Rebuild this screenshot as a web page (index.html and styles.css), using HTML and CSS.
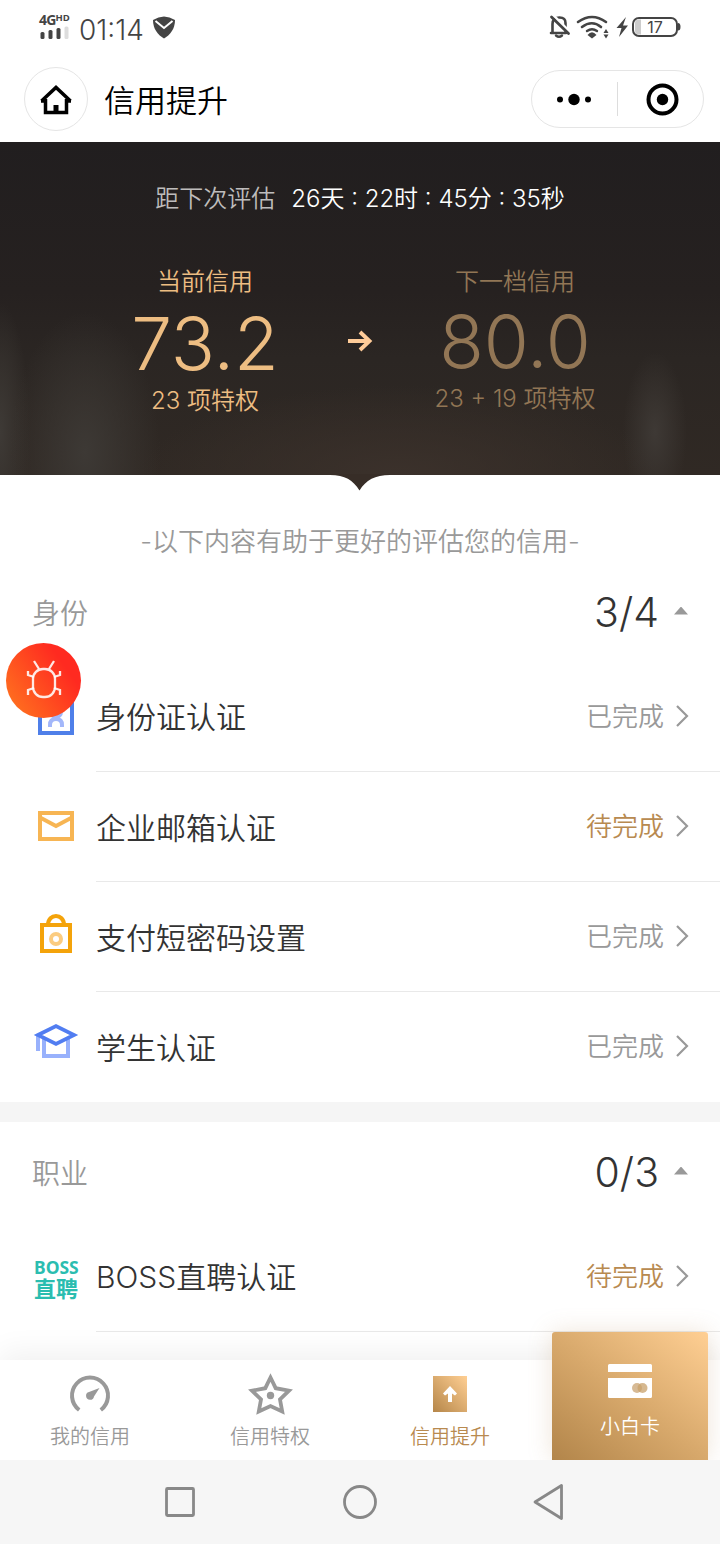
FILE: index.html
```html
<!DOCTYPE html>
<html lang="zh-CN">
<head>
<meta charset="utf-8">
<title>信用提升</title>
<link rel="stylesheet" href="styles.css">
</head>
<body>
<div class="phone">
  <header class="status">
    <div class="signal">
      <div class="net"><span>4G</span><small>HD</small></div>
      <svg width="30" height="13" viewBox="0 0 30 13"><g fill="#444"><rect x="1.500" y="5" width="4" height="7" rx="1.500"/><rect x="9.500" y="3" width="4" height="9" rx="1.500"/><rect x="17.500" y="1" width="4" height="11" rx="1.500"/></g><rect x="25.500" y="-.5" width="4" height="12.500" rx="1.500" fill="#ddd"/></svg>
    </div>
    <span class="clock">01:14</span>
    <svg class="shield" width="24" height="24" viewBox="0 0 24 24"><path d="M1 4Q12-3 23 4C23 13 18 19 12 22.500C6 19 1 13 1 4Z" fill="#444"/><path d="M3.500 5 12 12 20.500 5" fill="none" stroke="#fff" stroke-width="2"/></svg>
    <svg class="sys" width="134" height="28" viewBox="0 0 134 28">
      <g fill="none" stroke="#444" stroke-width="2" stroke-linecap="round">
        <path d="M3.500 21V13Q3.500 6.500 10.500 6.500Q16.500 6.500 16.500 12V20M2 22H17" stroke-width="2.600"/><path d="M7 24.500Q10 27 13 24.500" stroke-width="2.400"/>
        <path d="M4 4 20 20" stroke="#fff" stroke-width="2.500" stroke-linecap="butt"/><path d="M2.500 6 19.500 22.500" stroke-width="2.800"/>
        <path d="M29 11Q43 1 57 11" stroke-width="2.600"/><path d="M33 16Q43 8.500 52 16" stroke-width="2.600"/><path d="M38 20Q43 16.500 48 20" stroke-width="2.400"/>
      </g>
      <path d="M38.500 24Q43 18.500 47.500 24L43 27.500Z" fill="#444"/>
      <path d="M54.500 22 57 18 59.500 22ZM54.500 23.500 57 27.500 59.500 23.500Z" fill="#444"/>
      <path d="M77 6 67.500 17H72.500L70 26 79 14.500H74Z" fill="#444"/>
      <rect x="84" y="7" width="44" height="18" rx="6" fill="#fff" stroke="#444" stroke-width="2"/>
      <path d="M92 8.500V23.500H89.500Q86 23.500 86 19.500V12.500Q86 8.500 89.500 8.500Z" fill="#ccc"/>
      <path d="M129 12Q131.500 12 131.500 16Q131.500 19.500 129 19.500Z" fill="#444"/>
      <text x="106" y="21.500" text-anchor="middle" class="battery">17</text>
    </svg>
  </header>
  <nav class="titlebar">
    <div class="home"><svg width="34" height="32" viewBox="0 0 34 32"><path d="M2.500 18 17 4.500 31.500 18M6.500 16V29.500H27.500V16M2 18H8M26 18H32" fill="none" stroke="#000" stroke-width="3.500"/><rect x="14.500" y="22" width="5" height="7" fill="#000"/></svg></div>
    <h1>信用提升</h1>
    <div class="capsule">
      <svg width="36" height="14" viewBox="0 0 36 14"><circle cx="4" cy="7.500" r="3"/><circle cx="18" cy="7.500" r="5.700"/><circle cx="32" cy="7.500" r="3"/></svg>
      <i></i>
      <svg width="34" height="34" viewBox="0 0 34 34"><circle cx="17.500" cy="17.500" r="14" fill="none" stroke="#000" stroke-width="4"/><circle cx="17.500" cy="17.500" r="5.700"/></svg>
    </div>
  </nav>
  <main class="content">
    <section class="hero">
      <div class="count"><span class="dim">距下次评估</span><span>26天 : 22时 : 45分 : 35秒</span></div>
      <div class="scores">
        <div class="score now"><p>当前信用</p><strong>73.2</strong><p>23 项特权</p></div>
        <svg class="arrow" width="26" height="24" viewBox="0 0 26 24"><path d="M1 12H22M13 3 22.500 12 13 21" fill="none" stroke="#fc9" stroke-width="3.900"/></svg>
        <div class="score next"><p>下一档信用</p><strong>80.0</strong><p>23 + 19 项特权</p></div>
      </div>
      <svg class="notch" width="60" height="17" viewBox="0 0 60 17"><path d="M0 0V1C15 1 23 6 29.500 16.500C36 6 45 1 60 1V0Z" fill="#372d27"/></svg>
    </section>
    <p class="hint">-以下内容有助于更好的评估您的信用-</p>
    <section class="group">
      <div class="head"><span>身份</span><b>3/4</b><i></i></div>
      <div class="row">
        <div class="ico"><svg width="48" height="48" viewBox="0 0 48 48"><rect x="8" y="8" width="32" height="33" fill="none" stroke="#4f7fe9" stroke-width="4"/><circle cx="24" cy="20" r="7" fill="#a3b7fa"/><path d="M18 35V33Q18 27 24 27Q30 27 30 33V35" fill="none" stroke="#a3b7fa" stroke-width="4"/></svg></div>
        <div class="cell"><span>身份证认证</span><em>已完成</em><svg class="chev" width="14" height="24" viewBox="0 0 14 24"><path d="M2 2 12 12 2 22"/></svg></div>
      </div>
      <div class="row">
        <div class="ico"><svg width="48" height="48" viewBox="0 0 48 48"><rect x="8" y="11" width="32" height="26" fill="none" stroke="#f7b553" stroke-width="4"/><path d="M9 16 24 24 39 16" fill="none" stroke="#f7b553" stroke-width="4"/></svg></div>
        <div class="cell"><span>企业邮箱认证</span><em class="todo">待完成</em><svg class="chev" width="14" height="24" viewBox="0 0 14 24"><path d="M2 2 12 12 2 22"/></svg></div>
      </div>
      <div class="row">
        <div class="ico"><svg width="48" height="48" viewBox="0 0 48 48"><path d="M10 13H38V39H10ZM16 13C16 1 32 1 32 13" fill="none" stroke="#f4a30a" stroke-width="4"/><circle cx="24" cy="27" r="5" fill="none" stroke="#fbcc80" stroke-width="4"/></svg></div>
        <div class="cell"><span>支付短密码设置</span><em>已完成</em><svg class="chev" width="14" height="24" viewBox="0 0 14 24"><path d="M2 2 12 12 2 22"/></svg></div>
      </div>
      <div class="row last">
        <div class="ico"><svg width="48" height="48" viewBox="0 0 48 48"><path d="M12 16V34H36V16M6 14V29" fill="none" stroke="#98b1fc" stroke-width="4"/><path d="M6 13 24 4 42 13 24 22Z" fill="#fff" stroke="#517df1" stroke-width="3.800"/></svg></div>
        <div class="cell"><span>学生认证</span><em>已完成</em><svg class="chev" width="14" height="24" viewBox="0 0 14 24"><path d="M2 2 12 12 2 22"/></svg></div>
      </div>
    </section>
    <section class="group second">
      <div class="head"><span>职业</span><b>0/3</b><i></i></div>
      <div class="row">
        <div class="ico boss"><span>BOSS</span><span class="cn">直聘</span></div>
        <div class="cell"><span>BOSS直聘认证</span><em class="todo">待完成</em><svg class="chev" width="14" height="24" viewBox="0 0 14 24"><path d="M2 2 12 12 2 22"/></svg></div>
      </div>
    </section>
  </main>
  <footer class="tabs">
    <div class="tab"><svg width="48" height="48" viewBox="0 0 48 48"><path d="M13.200 40A18 18 0 1 1 34.800 40" fill="none" stroke="#999" stroke-width="4"/><path d="M33.500 18 28 26.500A4 4 0 1 1 23 22Z" fill="#999"/></svg><span>我的信用</span></div>
    <div class="tab"><svg width="48" height="48" viewBox="0 0 48 48"><path d="M24.500 7.500 29.700 18.200 43 20.700 34 29.500 36.200 41.500 24.500 36 12.800 41.500 15 29.500 6 20.700 19.300 18.200Z" fill="none" stroke="#999" stroke-width="3.800"/><circle cx="24.500" cy="25.500" r="3.700" fill="#999"/></svg><span>信用特权</span></div>
    <div class="tab on"><svg width="48" height="48" viewBox="0 0 48 48"><defs><linearGradient id="gold" x1="0" y1="1" x2="1" y2="0"><stop offset="0" stop-color="#b58649"/><stop offset="1" stop-color="#ffcf93"/></linearGradient></defs><rect x="7" y="6" width="34" height="36" fill="url(#gold)"/><path d="M24 16 31 23.500 29 25.500 26 23.500V32H22V23.500L19 25.500 17 23.500Z" fill="#fff"/></svg><span>信用提升</span></div>
    <div class="card"><svg width="48" height="48" viewBox="0 0 48 48"><path d="M2 16V9.500Q2 8 3.500 8H44.500Q46 8 46 9.500V16ZM2 22H46V40.500Q46 42 44.500 42H3.500Q2 42 2 40.500Z" fill="#fff"/><circle cx="31" cy="32" r="5" fill="#d7ba95"/><circle cx="36.500" cy="32" r="5" fill="#c8a06a" fill-opacity=".75"/></svg><span>小白卡</span></div>
  </footer>
  <div class="sysnav">
    <svg width="36" height="36" viewBox="0 0 36 36"><rect x="4.500" y="4.500" width="27" height="27" rx="1"/></svg>
    <svg width="36" height="36" viewBox="0 0 36 36"><circle cx="18" cy="18" r="15.500"/></svg>
    <svg width="36" height="36" viewBox="0 0 36 36"><path d="M39.500 1.500V34.500L13 18Z"/></svg>
  </div>
  <div class="bug"><svg width="36" height="40" viewBox="0 0 36 40"><rect x="7" y="10" width="22" height="28" rx="10" ry="10"/><path d="M8 2 13 10M28 2 23 10M2 12V16L8 18M34 12V16L28 18M2 36V31L8 29M34 36V31L28 29"/></svg></div>
</div>
</body>
</html>
```

FILE: styles.css
```css
* { box-sizing: border-box; margin: 0; padding: 0; }
body { background: #fff; font-family: Inter, "Noto Sans CJK SC", sans-serif; font-weight: 300; }
svg { display: block; flex: none; overflow: visible; }
em, i { font-style: normal; }
.phone { position: relative; display: flex; flex-direction: column; width: 720px; height: 1544px; overflow: hidden; }

.status { display: flex; height: 56px; flex: none; padding: 0 37px 0 39px; color: #444; }
.signal { width: 31px; padding-top: 13px; }
.net { display: flex; align-items: flex-start; height: 14px; font: 700 14px/14px "Open Sans", sans-serif; letter-spacing: -.8px; white-space: nowrap; }
.net small { font-size: 9.5px; line-height: 10px; letter-spacing: 0; }
.clock { margin-left: 9px; width: 66px; font-size: 28px; line-height: 60px; font-weight: 350; white-space: nowrap; }
.shield { margin: 16px 0 0 7px; }
.sys { margin: 11px 0 0 auto; }
.battery { font: 400 16px Inter, sans-serif; fill: #444; }

.titlebar { display: flex; align-items: flex-start; height: 86px; flex: none; padding: 11px 16px 0 24px; }
.home { display: flex; align-items: center; justify-content: center; width: 64px; height: 64px; border: 1px solid #e5e5e5; border-radius: 50%; }
h1 { margin-left: 16px; font-size: 31px; line-height: 68px; font-weight: 350; color: #000; }
.capsule { display: flex; align-items: center; width: 173px; height: 58px; margin: 3px 0 0 auto; padding-left: 24px; border: 1px solid #e5e5e5; border-radius: 29px; }
.capsule i { width: 1px; height: 34px; margin: 0 27px 0 25px; background: #ddd; }

.content { flex: 1; min-height: 0; overflow: hidden; }
.hero { position: relative; height: 333px; padding-top: 39px; background:
  radial-gradient(ellipse 32px 80px at 655px 290px, #3e3935 0, #3e393500 100%),
  radial-gradient(ellipse 75px 140px at 85px 310px, #3d3935 0, #3d393500 100%),
  radial-gradient(ellipse 30px 130px at 0 290px, #3e3a36 0, #3e3a3600 100%),
  radial-gradient(ellipse 260px 90px at 400px 333px, #3b312b 0, #3b312b00 100%),
  linear-gradient(#211e1f 0, #262120 45%, #2b2623 65%, #302924 100%); }
.count { display: flex; justify-content: center; gap: 16px; font-size: 24px; line-height: 36px; font-weight: 350; color: #fff; }
.count .dim { color: #bebcbc; }
.scores { display: flex; height: 160px; margin-top: 47px; }
.score { width: 230px; text-align: center; font-size: 24px; line-height: 36px; font-weight: 350; color: #edbd82; }
.score strong { display: block; height: 83px; font-size: 73px; line-height: 87px; font-weight: 300; white-space: nowrap; }
.now { margin-left: 90px; }
.next { color: #927655; }
.next strong { height: 81px; line-height: 83px; }
.arrow { margin: 65px 27px 0; }
.notch { position: absolute; left: 330px; top: 332px; }
.hint { height: 87px; padding-top: 39px; text-align: center; font-size: 26px; line-height: 56px; font-weight: 350; color: #999; }

.head { display: flex; align-items: center; height: 99px; padding: 0 32px; color: #999; font-size: 28px; font-weight: 350; }
.head span { padding-top: 1px; }
.head b { margin-left: auto; font-size: 41px; font-weight: 300; color: #333; }
.head i { width: 14px; height: 8px; margin: 0 0 2px 15px; background: #999; clip-path: polygon(50% 0, 100% 100%, 0 100%); }
.row { display: flex; height: 110px; padding-left: 32px; font-weight: 350; }
.group .head + .row { height: 111px; }
.ico { width: 64px; padding-top: 31px; }
.row + .row .ico { padding-top: 30px; }
.cell { display: flex; flex: 1; align-items: center; padding-right: 31px; border-bottom: 1px solid #e9e9e9; font-size: 30px; line-height: 44px; color: #333; }
.cell span { padding-top: 2px; }
.last .cell { border-bottom: 0; padding-bottom: 1px; }
.cell em { margin-left: auto; margin-right: 11px; padding-top: 1px; font-size: 26px; color: #999; }
.cell .todo { color: #b88a50; }
.chev { margin-bottom: 1px; }
.chev path { fill: none; stroke: #999; stroke-width: 2.2; }
.second { border-top: 20px solid #f5f5f5; }
.group .boss { padding-top: 36px; color: #2bbdb0; }
.boss span { display: block; height: 20px; padding-left: 2px; font: 700 17.5px/20px "Noto Sans", sans-serif; letter-spacing: 0; }
.boss .cn { height: 22px; font: 700 22px/20px "Noto Sans CJK SC", sans-serif; }

.tabs { position: relative; display: flex; flex: none; height: 100px; background: #fff; box-shadow: 0 -8px 28px rgba(0,0,0,.06); }
.tab { display: flex; flex-direction: column; align-items: center; width: 180px; padding-top: 10px; font-size: 20px; line-height: 38px; color: #999; font-weight: 350; }
.tab.on { color: #b88a50; }
.card { display: flex; flex-direction: column; align-items: center; width: 156px; height: 128px; margin: -28px 0 0 12px; padding-top: 24px; border-radius: 3px 3px 0 0; background: linear-gradient(38deg, #b2854a, #d7a86b 48%, #ffcf93); box-shadow: 0 0 24px rgba(184,138,80,.22); color: #fff; font-size: 20px; line-height: 46px; font-weight: 350; }
.sysnav { position: relative; display: flex; justify-content: center; gap: 144px; flex: none; height: 84px; padding-top: 24px; background: #f6f6f6; }
.sysnav svg { fill: none; stroke: #888; stroke-width: 2.8; stroke-linejoin: round; }
.bug { position: absolute; left: 6px; top: 643px; display: flex; align-items: center; justify-content: center; width: 75px; height: 75px; border-radius: 50%; background: linear-gradient(55deg, #ff7a1f, #ff2a20 75%); }
.bug svg { margin-bottom: 3px; fill: none; stroke: #fff; stroke-opacity: .88; stroke-width: 2.3; }
```
